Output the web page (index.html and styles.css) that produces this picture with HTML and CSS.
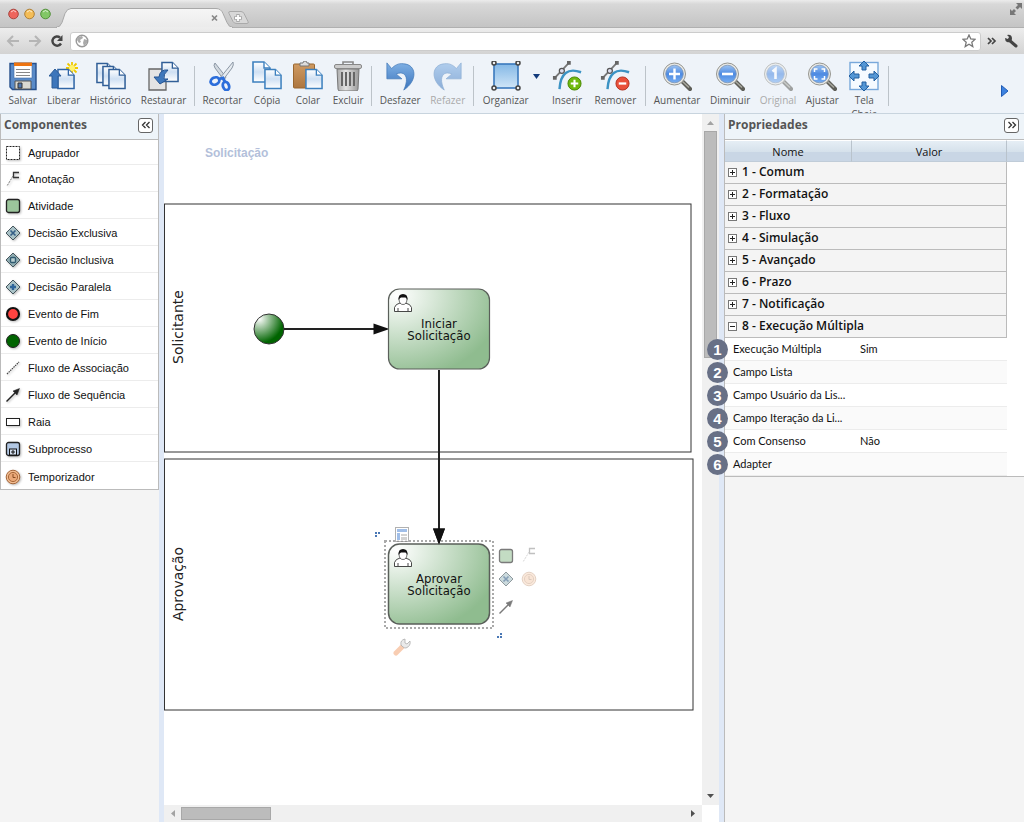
FILE: index.html
```html
<!DOCTYPE html>
<html lang="pt-BR">
<head>
<meta charset="utf-8">
<title>Modelador de processos</title>
<link rel="stylesheet" href="styles.css">
</head>
<body>
<svg class="defs" width="0" height="0" aria-hidden="true">
  <defs>
    <linearGradient id="gDoc" x1="0" y1="0" x2="0" y2="1"><stop offset="0" stop-color="#fff"/><stop offset=".5" stop-color="#cfe0f3"/><stop offset="1" stop-color="#fff"/></linearGradient>
    <linearGradient id="gBlue" x1="0" y1="0" x2="0" y2="1"><stop offset="0" stop-color="#7fb0e4"/><stop offset="1" stop-color="#3a74bd"/></linearGradient>
    <linearGradient id="gSquare" x1="0" y1="0" x2="0" y2="1"><stop offset="0" stop-color="#84b8e6"/><stop offset="1" stop-color="#cfe5f7"/></linearGradient>
    <linearGradient id="gClip" x1="0" y1="0" x2="0" y2="1"><stop offset="0" stop-color="#cf9a62"/><stop offset="1" stop-color="#ad7640"/></linearGradient>
    <linearGradient id="gMetal" x1="0" y1="0" x2="1" y2="0"><stop offset="0" stop-color="#aaa"/><stop offset=".4" stop-color="#e2e2e2"/><stop offset="1" stop-color="#999"/></linearGradient>
    <linearGradient id="gLens" x1="0" y1="0" x2="0" y2="1"><stop offset="0" stop-color="#9cc3f2"/><stop offset=".5" stop-color="#4d8ae2"/><stop offset="1" stop-color="#77aef2"/></linearGradient>
    <linearGradient id="gTab" x1="0" y1="0" x2="0" y2="1"><stop offset="0" stop-color="#f6f6f6"/><stop offset="1" stop-color="#ebebeb"/></linearGradient>
    <radialGradient id="gTask" cx="8%" cy="8%" r="105%"><stop offset="0" stop-color="#fff"/><stop offset="1" stop-color="#8fbc8f"/></radialGradient>
    <radialGradient id="gStart" cx="18%" cy="16%" r="85%"><stop offset="0" stop-color="#fff"/><stop offset=".95" stop-color="#006400"/></radialGradient>
    <symbol id="doc" viewBox="0 0 19 22"><path d="M1 1h11l6 6v14H1z" fill="url(#gDoc)" stroke="currentColor" stroke-width="1.6"/><path d="M12 1v6h6" fill="#fff" stroke="currentColor" stroke-width="1.4"/></symbol>
    <symbol id="lens" viewBox="0 0 30 30"><path d="M21 21l7 7" stroke="#5e5e58" stroke-width="4.2" stroke-linecap="round"/><path d="M20 20l7 6.500" stroke="#a9a9a0" stroke-width="1.500"/><circle cx="12.500" cy="13" r="11" fill="#e9e9e6" stroke="#95958f"/><circle cx="12.500" cy="13" r="8.800" fill="url(#gLens)" stroke="#7a93b5" stroke-width=".8"/></symbol>
    <symbol id="curve" viewBox="0 0 32 32"><path d="M8 30C9 13 17 7 31 12" fill="none" stroke="#3c93c4" stroke-width="2.600"/><path d="M3 18L18 2" stroke="#777" stroke-width="2"/><path d="M1 16h4v4H1zM16 0h4v4h-4z" fill="#666"/><circle cx="10.500" cy="10.500" r="2.700" fill="#dde" stroke="#555" stroke-width="1.300"/></symbol>
    <symbol id="undo" viewBox="0 0 32 32"><path d="M2 2v17h16l-6-5c8-4 15 2 8 17C35 21 34 4 20 3 14 2 10 5 7 8z" fill="url(#gBlue)" stroke="#4379b8" stroke-width=".8"/></symbol>
    <symbol id="user" viewBox="0 0 20 18"><path d="M1.500 17.500v-4q1-3.500 5.500-4.500h5.500q5 1 6 4.500v4zM5 17v-3M15 17v-3" fill="#fff" stroke="#333" stroke-width=".9"/><path d="M6 4.500q0 6 4 6t4-6l-1-2H7z" fill="#fff" stroke="#333" stroke-width=".7"/><path d="M5.500 6Q5 0 10 0t4.500 6q-1-2-2-2.500H8Q6.500 4 5.500 6z" fill="#111"/></symbol>
    <symbol id="activity" viewBox="0 0 16 16"><rect x="1.500" y="1.500" width="13" height="13" rx="2" fill="#9cc59c" stroke="#222" stroke-width="1.300"/></symbol>
    <symbol id="note" viewBox="0 0 16 16"><path d="M14 6.500H8.500v-5H14" fill="none" stroke="#333" stroke-width="1.300"/><path d="M8 5L2 15" stroke="#777" stroke-dasharray="2 1"/></symbol>
    <symbol id="exclusive" viewBox="0 0 16 16"><path d="M8 1l7 7-7 7-7-7z" fill="#a9c2c7" stroke="#45565d"/><path d="M5.500 5.500l5 5m0-5l-5 5" stroke="#345e86" stroke-width="1.600"/></symbol>
    <symbol id="timer" viewBox="0 0 16 16"><circle cx="8" cy="8" r="6.800" fill="#f2bd92" stroke="#a56639"/><circle cx="8" cy="8" r="4.600" fill="#eaa878" stroke="#a8683a"/><path d="M8 5v3.500h2.500" fill="none" stroke="#874b20"/></symbol>
    <symbol id="sequence" viewBox="0 0 16 16"><path d="M1.500 14.500L10 6" stroke="#222" stroke-width="1.500"/><path d="M14.500 1.500L12 8 8 4z" fill="#222" stroke="#222" stroke-width=".5"/></symbol>
  </defs>
</svg>

<header class="browser">
  <div class="tabstrip">
    <svg class="lights" width="52" height="28" viewBox="0 0 52 28" role="img" aria-label="Controles da janela">
      <circle cx="13.500" cy="14" r="4.800" fill="#ee655d" stroke="#a9453f"/><circle cx="29.500" cy="14" r="4.800" fill="#f4bd57" stroke="#ae8038"/><circle cx="45.500" cy="14" r="4.800" fill="#82c766" stroke="#54913c"/>
      <path d="M11 12q2.500-3 5 0M27 12q2.500-3 5 0M43 12q2.500-3 5 0" stroke="#fff" stroke-opacity=".7" fill="none"/>
    </svg>
    <svg class="tab" width="200" height="28" viewBox="0 0 200 28" role="img" aria-label="Aba">
      <path d="M174 11.500h11q2 0 3 2l4 8q1 2-1 2h-10q-3 0-4-2l-4-8q-1-2 1-2z" fill="#d8d8d8" stroke="#aaa"/><path d="M182 14v8m-4-4h8" stroke="#aaa" stroke-width="3.500"/><path d="M182 15v6m-3-3h6" stroke="#fff" stroke-width="1.800"/>
      <path d="M0 27.500q4 0 6-5l3-9q2-5 6-5H160q5 0 7 5l4 9q2 5 6 5z" fill="url(#gTab)" stroke="#a8a8a8"/><path d="M1 28h175" stroke="#ededed" stroke-width="2"/>
      <path d="M156 15.500l5 5m0-5l-5 5" stroke="#888" stroke-width="1.700"/>
    </svg>
    <svg class="expand" width="14" height="14" viewBox="0 0 14 14" aria-hidden="true"><path d="M7 1h6v6l-2-2-2.500 2.500-2-2L9 3zM1 7v6h6l-2-2 2-2-2-2-2 2z" fill="#777"/></svg>
  </div>
  <form class="navbar">
    <div class="history">
      <button type="button" aria-label="Voltar"><svg width="14" height="14" viewBox="0 0 14 14"><path d="M7 2L2 7l5 5M2 7h11" fill="none" stroke="#b5b5b5" stroke-width="2"/></svg></button>
      <button type="button" aria-label="Avançar"><svg width="14" height="14" viewBox="0 0 14 14"><path d="M7 2l5 5-5 5M12 7H1" fill="none" stroke="#b5b5b5" stroke-width="2"/></svg></button>
      <button type="button" aria-label="Recarregar"><svg width="14" height="14" viewBox="0 0 14 14"><path d="M11 9.500A4.600 4.600 0 1 1 10 3.500" fill="none" stroke="#444" stroke-width="2.400"/><path d="M12.500 1v6H7z" fill="#444"/></svg></button>
    </div>
    <label class="address">
      <svg width="14" height="14" viewBox="0 0 14 14" aria-hidden="true"><circle cx="7" cy="7" r="5.800" fill="#fff" stroke="#999" stroke-width="1.400"/><path d="M3 3l4-1 1 2-3 2 1 2-2 1-2-3zM9 5l3 1v3l-3 3-1-3z" fill="#aaa"/></svg>
      <input type="text" aria-label="Endereço">
      <svg width="14" height="14" viewBox="0 0 14 14" aria-hidden="true"><path d="M7 1l1.800 4 4.200.4-3.200 2.900 1 4.300L7 10.300l-3.800 2.300 1-4.300L1 5.400 5.200 5z" fill="#fff" stroke="#777" stroke-width="1.300"/></svg>
    </label>
    <button type="button" aria-label="Mais"><svg width="10" height="14" viewBox="0 0 10 14"><path d="M1 4l3 3-3 3M5 4l3 3-3 3" fill="none" stroke="#444" stroke-width="1.700"/></svg></button>
    <button type="button" aria-label="Ferramentas"><svg width="16" height="14" viewBox="0 0 16 14"><path d="M6 6l7 6" stroke="#444" stroke-width="3" stroke-linecap="round"/><path d="M2 4l3 1 1-2-2-2q5-1 5 4-1 4-5 3-2-1-2-4z" fill="#444"/></svg></button>
  </form>
</header>

<nav class="toolbar" aria-label="Ferramentas">
  <div class="group g1">
    <button class="tool"><svg width="30" height="30" viewBox="0 0 30 30"><path d="M2 2.500h26v26H4.500L2 26z" fill="#5a8bc8" stroke="#254f8c" stroke-width="1.400"/><path d="M6 2h18v15H6z" fill="#fff" stroke="#406da6" stroke-width=".6"/><path d="M6 1.500h18v3.500H6z" fill="#ee7410"/><path d="M8 8.500h14M8 11.500h14M8 14.500h14" stroke="#888"/><path d="M7 20h16v8H7z" fill="#d9d9d2" stroke="#555"/><path d="M10 22h4v5h-4z" fill="#4f79b2" stroke="#333"/></svg>Salvar</button>
    <button class="tool"><svg width="30" height="30" viewBox="0 0 30 30" color="#2f65a7"><g stroke="#efc800" stroke-width="1.800"><path d="M23 1v12M17 7h12M18.500 2.500l9 9m0-9l-9 9"/></g><circle cx="23" cy="7" r="3" fill="#fff36e"/><use href="#doc" x="8" y="7" width="18" height="22"/><path d="M6 8l6 7H9v12H3V15H0z" fill="#3d76bb" stroke="#2c5c98"/></svg>Liberar</button>
    <button class="tool"><svg width="32" height="30" viewBox="0 0 32 30" color="#315f98"><use href="#doc" x="1" y="1" width="18" height="22"/><use href="#doc" x="7" y="4" width="18" height="22"/><use href="#doc" x="13" y="7" width="18" height="22"/></svg>Histórico</button>
    <button class="tool"><svg width="32" height="30" viewBox="0 0 32 30" color="#315f98"><path d="M1 8h17v21H1z" fill="#e4e4e4" stroke="#666" stroke-width="1.300"/><use href="#doc" x="13" y="0" width="18" height="22"/><path d="M20 9q-8-1-9 7H6l6 7 8-5h-4q-1-5 4-9z" fill="#3f78bc" stroke="#275592"/></svg>Restaurar</button>
  </div>
  <div class="group g2">
    <button class="tool"><svg width="30" height="30" viewBox="0 0 30 30"><path d="M8 2q-2 2 0 5l9 12 2-3z" fill="#d2d9e0" stroke="#8b97a5"/><path d="M26 1q1 3-1 6l-9 12-3-2z" fill="#e6ebf0" stroke="#8b97a5"/><g fill="none" stroke="#2c6edb" stroke-width="2.800"><ellipse cx="8" cy="20" rx="4.500" ry="3.500" transform="rotate(-25 8 20)"/><ellipse cx="19" cy="25" rx="3" ry="4.200" transform="rotate(-20 19 25)"/><path d="M12 18l4-1 2 4"/></g></svg>Recortar</button>
    <button class="tool"><svg width="32" height="30" viewBox="0 0 32 30" color="#3d80be"><use href="#doc" x="1" y="0" width="19" height="22"/><use href="#doc" x="13" y="7" width="18" height="22"/></svg>Cópia</button>
    <button class="tool"><svg width="32" height="30" viewBox="0 0 32 30" color="#3d80be"><rect x="1.500" y="3" width="21" height="24" rx="1" fill="url(#gClip)" stroke="#99662f"/><path d="M8 5V2h3q0-2 2-2t2 2h2v3z" fill="#ddd" stroke="#777"/><use href="#doc" x="13" y="7" width="18" height="22"/></svg>Colar</button>
    <button class="tool"><svg width="30" height="30" viewBox="0 0 30 30"><path d="M4 8h22l-1 20q0 2-2 2H7q-2 0-2-2z" fill="url(#gMetal)" stroke="#777"/><path d="M10 4V1h10v3" fill="none" stroke="#888" stroke-width="1.600"/><rect x="1.500" y="3.500" width="27" height="4" rx="1.500" fill="#ccc" stroke="#888"/><path d="M9 11v14M13 11v14M17 11v14M21 11v14" stroke="#666" stroke-width="2"/></svg>Excluir</button>
  </div>
  <div class="group g3">
    <button class="tool"><svg width="32" height="30" viewBox="0 0 32 32"><use href="#undo"/></svg>Desfazer</button>
    <button class="tool off"><svg width="32" height="30" viewBox="0 0 32 32"><use href="#undo" transform="translate(32 0) scale(-1 1)"/></svg>Refazer</button>
  </div>
  <div class="group g4">
    <div class="combo">
      <button class="tool"><svg width="30" height="30" viewBox="0 0 30 30"><rect x="3" y="3" width="24" height="24" fill="url(#gSquare)" stroke="#3a79bd" stroke-width="1.600"/><g fill="#eee" stroke="#444" stroke-width="1.500"><circle cx="3" cy="2" r="2"/><circle cx="27" cy="2" r="2"/><circle cx="3" cy="27" r="2"/><circle cx="27" cy="27" r="2"/></g></svg>Organizar</button>
      <button class="drop" aria-label="Opções de organizar"><svg width="7" height="5" viewBox="0 0 7 5"><path d="M0 0h7L3.500 5z" fill="#123a7c"/></svg></button>
    </div>
    <button class="tool"><svg width="32" height="32" viewBox="0 0 32 32"><use href="#curve"/><circle cx="24" cy="24" r="7" fill="#6fb90d" stroke="#468500"/><path d="M24 20v8m-4-4h8" stroke="#fff" stroke-width="2.200"/></svg>Inserir</button>
    <button class="tool"><svg width="32" height="32" viewBox="0 0 32 32"><use href="#curve"/><circle cx="24" cy="24" r="7" fill="#e9503a" stroke="#b0301f"/><path d="M20 24h8" stroke="#fff" stroke-width="2.400"/></svg>Remover</button>
  </div>
  <div class="group g5">
    <button class="tool"><svg width="30" height="30" viewBox="0 0 30 30"><use href="#lens"/><path d="M12.500 7.500v11M7 13h11" stroke="#fff" stroke-width="2.400"/></svg>Aumentar</button>
    <button class="tool"><svg width="30" height="30" viewBox="0 0 30 30"><use href="#lens"/><path d="M7 13h11" stroke="#fff" stroke-width="2.600"/></svg>Diminuir</button>
    <button class="tool off"><svg width="30" height="30" viewBox="0 0 30 30"><use href="#lens"/><path d="M9.500 10.500l3-2.500v10" fill="none" stroke="#fff" stroke-width="2.600"/></svg>Original</button>
    <button class="tool"><svg width="30" height="30" viewBox="0 0 30 30"><use href="#lens"/><path d="M7.500 11V8h3M14.500 8h3v3M17.500 15v3h-3M10.500 18h-3v-3" fill="none" stroke="#fff" stroke-width="1.500"/></svg>Ajustar</button>
    <button class="tool narrow"><svg width="30" height="30" viewBox="0 0 30 30"><rect x="1" y="1.500" width="28" height="27" fill="#f5faff" stroke="#78a8db" stroke-width="1.400"/><g fill="#5396d5" stroke="#235f9f"><path d="M15 0l5 5h-3v4h-4V5h-3z"/><path d="M15 30l5-5h-3v-4h-4v4h-3z"/><path d="M0 15l5-5v3h5v4H5v3zM30 15l-5-5v3h-5v4h5v3z"/></g></svg>Tela Cheia</button>
  </div>
  <button class="more" aria-label="Mais ferramentas"><svg width="8" height="12" viewBox="0 0 8 12"><path d="M.5.500L7 6 .5 11.500z" fill="#3d82e0" stroke="#205bb5"/></svg></button>
</nav>

<main class="work">
  <aside class="side">
    <div class="panel">
      <div class="head"><h2>Componentes</h2><button class="fold" aria-label="Recolher componentes"><svg width="10" height="10" viewBox="0 0 10 10"><path d="M4.500 2l-3 3 3 3M8.500 2l-3 3 3 3" fill="none" stroke="#333" stroke-width="1.300"/></svg></button></div>
      <ul class="parts">
        <li><svg class="ic" viewBox="0 0 16 16"><rect x="1.500" y="1.500" width="13" height="13" fill="#fff" stroke="#222" stroke-dasharray="2 1"/></svg>Agrupador</li>
        <li><svg class="ic" viewBox="0 0 16 16"><use href="#note"/></svg>Anotação</li>
        <li><svg class="ic" viewBox="0 0 16 16"><use href="#activity"/></svg>Atividade</li>
        <li><svg class="ic" viewBox="0 0 16 16"><use href="#exclusive"/></svg>Decisão Exclusiva</li>
        <li><svg class="ic" viewBox="0 0 16 16"><path d="M8 1l7 7-7 7-7-7z" fill="#91aeb3" stroke="#45565d"/><rect x="5.500" y="5.500" width="5" height="5" rx="1" fill="#b7cdd0" stroke="#315b70" stroke-width="1.400"/></svg>Decisão Inclusiva</li>
        <li><svg class="ic" viewBox="0 0 16 16"><path d="M8 1l7 7-7 7-7-7z" fill="#a9c2c7" stroke="#45565d"/><path d="M8 5v6M5 8h6" stroke="#2f659a" stroke-width="2.400"/></svg>Decisão Paralela</li>
        <li><svg class="ic" viewBox="0 0 16 16"><circle cx="8" cy="8" r="6" fill="#ff4340" stroke="#111" stroke-width="2.200"/></svg>Evento de Fim</li>
        <li><svg class="ic" viewBox="0 0 16 16"><circle cx="8" cy="8" r="6.500" fill="#006400" stroke="#222"/></svg>Evento de Início</li>
        <li><svg class="ic" viewBox="0 0 16 16"><path d="M2 14L14 2" stroke="#444" stroke-width="1.200" stroke-dasharray="1.500 .8"/></svg>Fluxo de Associação</li>
        <li><svg class="ic" viewBox="0 0 16 16"><use href="#sequence"/></svg>Fluxo de Sequência</li>
        <li><svg class="ic" viewBox="0 0 16 16"><rect x="1.500" y="4.500" width="13" height="7" fill="#fff" stroke="#222"/></svg>Raia</li>
        <li><svg class="ic" viewBox="0 0 16 16"><rect x="1.500" y="1.500" width="13" height="13" rx="2" fill="#b2c7e3" stroke="#222" stroke-width="1.300"/><rect x="4.500" y="8" width="7" height="6" fill="#d6e1f0" stroke="#111"/><path d="M8 9v4M6 11h4" stroke="#111"/></svg>Subprocesso</li>
        <li><svg class="ic" viewBox="0 0 16 16"><use href="#timer"/></svg>Temporizador</li>
      </ul>
    </div>
  </aside>
  <div class="split"></div>

  <section class="stage" aria-label="Diagrama">
    <div class="canvas">
      <svg class="diagram" width="538" height="691" viewBox="0 0 538 691">
        <text class="t-title" x="41" y="43">Solicitação</text>
        <rect x="0.500" y="90" width="526.500" height="248" fill="none" stroke="#333"/>
        <rect x="0.500" y="345" width="528.500" height="251" fill="none" stroke="#333"/>
        <text class="t-lane" transform="translate(19 213) rotate(-90)" text-anchor="middle">Solicitante</text>
        <text class="t-lane" transform="translate(19 470) rotate(-90)" text-anchor="middle">Aprovação</text>
        <circle cx="105" cy="215" r="15" fill="url(#gStart)" stroke="#333"/>
        <path d="M120 215h92M275 256v160" stroke="#222" stroke-width="2"/>
        <path d="M209.500 209.500l16 5.500-16 5.500zM269 414.500h12l-6 16z" fill="#111"/>
        <rect x="224.500" y="175" width="101" height="80" rx="11" fill="url(#gTask)" stroke="#5a5f5a" stroke-width="1.200"/>
        <use href="#user" x="229" y="180" width="20" height="18"/>
        <text class="t-task" x="275" y="214" text-anchor="middle">Iniciar</text>
        <text class="t-task" x="275" y="226" text-anchor="middle">Solicitação</text>
        <rect x="221" y="427" width="108" height="87" fill="none" stroke="#aaa" stroke-width="2" stroke-dasharray="2 2"/>
        <g opacity=".65"><rect x="231.500" y="413.500" width="13" height="14" fill="#fff" stroke="#888"/><path d="M233 415h10v3h-10zM233 419h3v7h-3z" fill="#6e9cdc"/><path d="M237 420h6v2h-6zM237 423h6v3h-6z" fill="#bbb"/></g>
        <rect x="224.500" y="430" width="101" height="80" rx="11" fill="url(#gTask)" stroke="#5a5f5a" stroke-width="1.500"/>
        <path d="M269 414.500h12l-6 16z" fill="#111"/>
        <use href="#user" x="229" y="435" width="20" height="18"/>
        <text class="t-task" x="275" y="469" text-anchor="middle">Aprovar</text>
        <text class="t-task" x="275" y="481" text-anchor="middle">Solicitação</text>
        <path d="M211 418h2v2h-2zM214 418h2v2h-2zM211 421h2v2h-2zM336 519h2v2h-2zM336 522h2v2h-2zM333 522h2v2h-2z" fill="#4a78b5"/>
        <g opacity=".6"><use href="#activity" x="334" y="434" width="16" height="16"/><use href="#exclusive" x="334" y="457" width="16" height="16"/><use href="#sequence" x="334" y="485" width="16" height="16"/></g>
        <g opacity=".3"><use href="#note" x="357" y="433" width="16" height="16"/><use href="#timer" x="357" y="457" width="16" height="16"/></g>
        <g opacity=".6"><path d="M232 539l6-6" stroke="#f5ad80" stroke-width="5" stroke-linecap="round"/><path d="M237 531q-1-5 4-6l0 4 2 1 3-3q1 5-4 7-2 0-3-1z" fill="#ddd" stroke="#777" stroke-width=".8"/></g>
      </svg>
      <div class="vbar"><svg width="7" height="4" viewBox="0 0 7 4"><path d="M0 4h7L3.500 0z" fill="#a3a3a3"/></svg><div class="vthumb"></div><svg width="7" height="4" viewBox="0 0 7 4"><path d="M0 0h7L3.500 4z" fill="#505050"/></svg></div>
    </div>
    <div class="hbar"><svg width="4" height="7" viewBox="0 0 4 7"><path d="M4 0v7L0 3.500z" fill="#a3a3a3"/></svg><div class="hthumb"></div><svg width="4" height="7" viewBox="0 0 4 7"><path d="M0 0v7l4-3.500z" fill="#505050"/></svg></div>
  </section>
  <div class="split"></div>

  <aside class="props">
    <div class="head"><h2>Propriedades</h2><button class="fold" aria-label="Recolher propriedades"><svg width="10" height="10" viewBox="0 0 10 10"><path d="M1.500 2l3 3-3 3M5.500 2l3 3-3 3" fill="none" stroke="#333" stroke-width="1.300"/></svg></button></div>
    <table class="grid">
      <colgroup><col class="c-name"><col><col class="c-gap"></colgroup>
      <thead><tr><th scope="col">Nome</th><th scope="col">Valor</th><td></td></tr></thead>
      <tbody>
        <tr class="cat"><td colspan="2"><button><i class="box"></i>1 - Comum</button></td><td></td></tr>
        <tr class="cat"><td colspan="2"><button><i class="box"></i>2 - Formatação</button></td><td></td></tr>
        <tr class="cat"><td colspan="2"><button><i class="box"></i>3 - Fluxo</button></td><td></td></tr>
        <tr class="cat"><td colspan="2"><button><i class="box"></i>4 - Simulação</button></td><td></td></tr>
        <tr class="cat"><td colspan="2"><button><i class="box"></i>5 - Avançado</button></td><td></td></tr>
        <tr class="cat"><td colspan="2"><button><i class="box"></i>6 - Prazo</button></td><td></td></tr>
        <tr class="cat"><td colspan="2"><button><i class="box"></i>7 - Notificação</button></td><td></td></tr>
        <tr class="cat"><td colspan="2"><button><i class="box open"></i>8 - Execução Múltipla</button></td><td></td></tr>
        <tr class="item"><td><span class="badge">1</span>Execução Múltipla</td><td>Sim</td><td></td></tr>
        <tr class="item"><td><span class="badge">2</span>Campo Lista</td><td></td><td></td></tr>
        <tr class="item"><td><span class="badge">3</span>Campo Usuário da Lis...</td><td></td><td></td></tr>
        <tr class="item"><td><span class="badge">4</span>Campo Iteração da Li...</td><td></td><td></td></tr>
        <tr class="item"><td><span class="badge">5</span>Com Consenso</td><td>Não</td><td></td></tr>
        <tr class="item"><td><span class="badge">6</span>Adapter</td><td></td><td></td></tr>
      </tbody>
    </table>
  </aside>
</main>
</body>
</html>
```

FILE: styles.css
```css
* { box-sizing: border-box; }
body {
  margin: 0;
  height: 100vh;
  display: flex;
  flex-direction: column;
  overflow: hidden;
  background: #f4f4f4;
  font-family: "Open Sans", "Noto Sans", sans-serif;
  font-size: 11px;
  color: #111;
}
button { border: 0; padding: 0; background: none; font: inherit; color: inherit; }
svg { display: block; flex: none; }
.defs { position: absolute; }

/* Browser window */
.tabstrip {
  height: 28px;
  display: flex;
  background: linear-gradient(#ececec, #d8d8d8 15%, #c4c4c4);
  border-bottom: 1px solid #b0b0b0;
}
.tab { margin-left: 4px; }
.expand { margin: 2px 1px 0 auto; }
.navbar {
  height: 26px;
  margin: 0;
  padding: 0 5px 0 6px;
  display: flex;
  align-items: center;
  gap: 6px;
  background: linear-gradient(#ededed, #d3d3d3);
}
.history { display: flex; gap: 8px; }
.address {
  flex: 1;
  height: 19px;
  padding: 0 4px;
  display: flex;
  align-items: center;
  background: #fff;
  border: 1px solid #ccc;
  border-radius: 3px;
}
.address input { flex: 1; min-width: 0; border: 0; outline: 0; background: none; font: inherit; }

/* Toolbar */
.toolbar {
  height: 60px;
  flex: none;
  overflow: hidden;
  display: flex;
  background: #eef3f9;
  border-bottom: 1px solid #c8d4de;
}
.group { position: relative; display: flex; justify-content: space-around; padding: 7px 4px 0 3px; flex: none; }
.group::after {
  content: "";
  position: absolute;
  right: 0;
  top: 12px;
  height: 40px;
  border-right: 1px solid #bcc3c9;
}
.g1 { width: 195px; }
.g2 { width: 177px; }
.g3 { width: 102px; }
.g4 { width: 172px; }
.g5 { width: 243px; }
.tool {
  display: flex;
  flex-direction: column;
  align-items: center;
  height: 60px;
  font-size: 10px;
  line-height: 14px;
  color: #555;
}
.tool svg { height: 30px; margin-bottom: 2px; }
.tool.off { color: #aaa; }
.tool.off svg { opacity: .55; }
.tool.narrow { width: 32px; }
.combo { display: flex; gap: 4px; }
.drop { align-self: flex-start; padding-top: 13px; }
.more { margin: 14px 15px 0 auto; }

/* Work area */
.work { flex: 1; min-height: 0; display: flex; }
.split { width: 5px; flex: none; background: #dfe8f6; }
.head {
  height: 26px;
  padding: 0 5px 3px 3px;
  display: flex;
  align-items: center;
  justify-content: space-between;
  background: #eef4f9;
  border-bottom: 1px solid #bbb;
}
.head h2 { margin: 0; font-size: 12px; line-height: 16px; font-weight: 700; color: #555; }
.fold {
  width: 15px;
  height: 15px;
  display: flex;
  align-items: center;
  justify-content: center;
  border: 1px solid #666;
  border-radius: 3px;
  background: #fff;
}
.side { width: 159px; flex: none; }
.panel { border: 1px solid #bbb; border-top: 0; background: #fff; }
.parts { margin: 0; padding: 0; list-style: none; font-family: "Liberation Sans", Arial, sans-serif; }
.parts li {
  height: 27px;
  padding: 2px 0 0 4px;
  display: flex;
  align-items: center;
  gap: 7px;
  border-bottom: 1px solid #ececec;
}
.parts li:first-child { height: 25px; }
.parts li:last-child { border-bottom: 0; }
.ic { width: 16px; height: 16px; filter: drop-shadow(1px 1px 1px #bbb); }

.stage { flex: 1; min-width: 0; display: flex; flex-direction: column; background: #fff; }
.canvas { flex: 1; min-height: 0; display: flex; justify-content: space-between; overflow: hidden; }
.diagram { flex: 0 1 auto; min-width: 0; }
.vbar { width: 17px; flex: none; padding: 7px 2px; display: flex; flex-direction: column; align-items: center; background: #f0f0f0; }
.vbar svg:last-child { margin-top: auto; }
.vthumb { width: 13px; height: 227px; margin-top: 6px; background: #bcbcbc; border: 1px solid #a8a8a8; }
.hbar { height: 17px; flex: none; margin-right: 17px; padding: 2px 7px; display: flex; align-items: center; background: #f0f0f0; }
.hbar svg:last-child { margin-left: auto; }
.hthumb { width: 90px; height: 13px; margin-left: 6px; background: #bcbcbc; border: 1px solid #a8a8a8; }
.t-title { font: 700 12px "Liberation Sans", Arial, sans-serif; fill: #b3bfda; }
.t-lane { font: 14px "DejaVu Sans", Verdana, sans-serif; fill: #222; }
.t-task { font: 13px "DejaVu Sans Condensed", "DejaVu Sans", sans-serif; fill: #111; }

/* Properties */
.props { width: 300px; flex: none; border-left: 1px solid #bbb; }
.grid { width: 100%; border-collapse: separate; border-spacing: 0; table-layout: fixed; background: #fff; border-bottom: 1px solid #bbb; }
.c-name { width: 127px; }
.c-gap { width: 17px; }
.grid td, .grid th { padding: 0; }
.grid thead th, .grid thead td {
  height: 22px;
  border-top: 1px solid #fff;
  border-bottom: 1px solid #c0ccd8;
  background: linear-gradient(#e6eef5, #d5e1eb 55%, #c9d6e5 56%, #c9d6e5);
  font-size: 11px;
  font-weight: 400;
}
.grid thead th { border-right: 1px solid #b9c3cc; }
.cat td:first-child { height: 22px; padding-bottom: 1px; background: #f4f4f4; border-bottom: 1px solid #bbb; border-right: 1px solid #bbb; }
.cat button { display: flex; align-items: center; gap: 5px; padding-left: 3px; font-size: 12px; line-height: 16px; font-weight: 600; }
.box {
  width: 9px;
  height: 9px;
  border: 1px solid #777;
  background: linear-gradient(#222, #222) center / 5px 1px no-repeat, linear-gradient(#222, #222) center / 1px 5px no-repeat, #fff;
}
.box.open { background: linear-gradient(#222, #222) center / 5px 1px no-repeat, #fff; }
.item td { position: relative; height: 23px; padding: 0 0 1px 8px; white-space: nowrap; font-family: Lato, "Open Sans", sans-serif; }
.item td:not(:last-child) { border-bottom: 1px solid #ececec; }
.item:nth-child(even) td:not(:last-child) { background: #fafafa; }
.badge {
  position: absolute;
  left: -18px;
  top: 1px;
  width: 21px;
  height: 21px;
  border-radius: 50%;
  background: #687086;
  color: #fff;
  font: 700 15px/21px "Liberation Sans", Arial, sans-serif;
  text-align: center;
}
```
